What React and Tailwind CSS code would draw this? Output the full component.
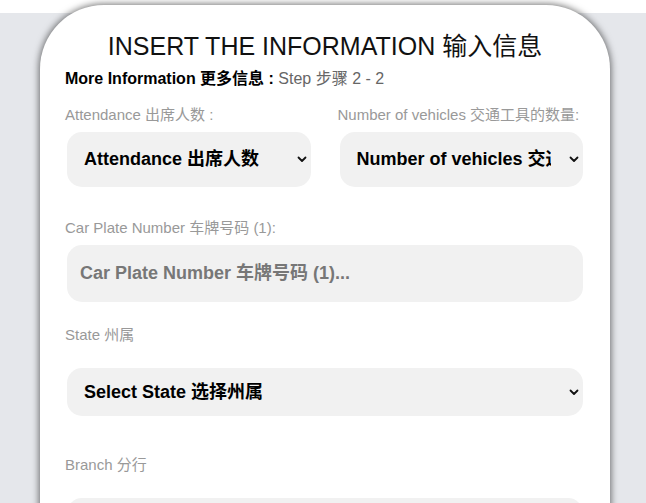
import React from "react";

const font = { fontFamily: '"Liberation Sans", Arial, "Noto Sans CJK SC", sans-serif' };

function Chevron() {
  return (
    <svg width="10" height="7" viewBox="0 0 10 7" className="shrink-0">
      <path d="M1.5 1.5 L5 5 L8.5 1.5" fill="none" stroke="#111" strokeWidth="1.8" strokeLinecap="round" strokeLinejoin="round" />
    </svg>
  );
}

function SelectBox({ text, h = "h-[55px]" }) {
  return (
    <div className={`mx-[2px] ${h} rounded-[15px] bg-[#f1f1f1] flex items-center pl-[17px] pr-[4px]`}>
      <span className="flex-1 mr-[18px] overflow-hidden whitespace-nowrap text-[18px] font-bold text-black">{text}</span>
      <Chevron />
    </div>
  );
}

export default function App() {
  return (
    <div className="w-[646px] h-[503px] overflow-hidden bg-white" style={font}>
      <div className="h-[13px] bg-white" />
      <div className="h-[490px] bg-[#e5e7eb] flex flex-col">
        <div className="-mt-[8px] ml-[40px] w-[570px] h-[520px] bg-white rounded-t-[64px] shadow-[0_0_7px_1px_rgba(0,0,0,0.55)] px-[25px] pt-[27px]">
          <h1 className="text-center text-[25px] leading-[28px] text-[#111] whitespace-nowrap">
            INSERT THE INFORMATION 输入信息
          </h1>
          <p className="mt-[9px] text-[16px] leading-[20px] whitespace-nowrap">
            <span className="font-bold text-black">More Information 更多信息 : </span>
            <span className="text-[#666]">Step 步骤 2 - 2</span>
          </p>
          <div className="mt-[18px] grid grid-cols-2 gap-x-[25px] w-[520px]">
            <div>
              <div className="text-[15px] leading-[16px] text-[#999] whitespace-nowrap">Attendance 出席人数 :</div>
              <div className="mt-[9px]"><SelectBox text="Attendance 出席人数" /></div>
            </div>
            <div>
              <div className="text-[15px] leading-[16px] text-[#999] whitespace-nowrap">Number of vehicles 交通工具的数量:</div>
              <div className="mt-[9px]"><SelectBox text="Number of vehicles 交通工具的数量" /></div>
            </div>
          </div>
          <div className="mt-[33px] w-[520px]">
            <div className="text-[15px] leading-[16px] text-[#999]">Car Plate Number 车牌号码 (1):</div>
            <div className="mt-[9px] mx-[2px] h-[57px] rounded-[15px] bg-[#f1f1f1] flex items-center pl-[13px]">
              <span className="text-[18px] font-bold text-[#777]">Car Plate Number 车牌号码 (1)...</span>
            </div>
          </div>
          <div className="mt-[25px] w-[520px]">
            <div className="text-[15px] leading-[16px] text-[#999]">State 州属</div>
            <div className="mt-[25px]"><SelectBox text="Select State 选择州属" h="h-[48px]" /></div>
          </div>
          <div className="mt-[41px] w-[520px]">
            <div className="text-[15px] leading-[16px] text-[#999]">Branch 分行</div>
            <div className="mt-[25px] mx-[2px] h-[48px] rounded-[15px] bg-[#f1f1f1]" />
          </div>
        </div>
      </div>
    </div>
  );
}
